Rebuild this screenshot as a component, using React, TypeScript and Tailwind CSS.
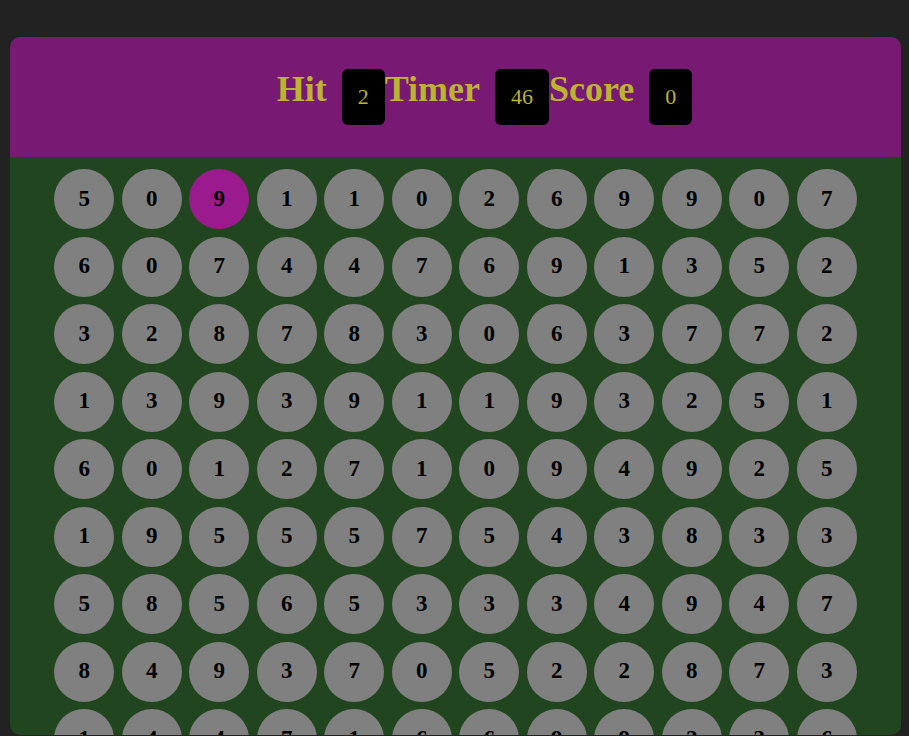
import React from "react";

const rows = [
  "5 0 9 1 1 0 2 6 9 9 0 7",
  "6 0 7 4 4 7 6 9 1 3 5 2",
  "3 2 8 7 8 3 0 6 3 7 7 2",
  "1 3 9 3 9 1 1 9 3 2 5 1",
  "6 0 1 2 7 1 0 9 4 9 2 5",
  "1 9 5 5 5 7 5 4 3 8 3 3",
  "5 8 5 6 5 3 3 3 4 9 4 7",
  "8 4 9 3 7 0 5 2 2 8 7 3",
  "1 4 4 7 1 6 6 9 9 2 3 6",
];

const nums = rows.flatMap((r) => r.split(" "));

function Stat({ label, value }: { label: string; value: string }) {
  return (
    <div className="flex items-start">
      <span className="mt-[2px] text-[36px] font-bold leading-none text-[#bdb330] mr-[15px]">{label}</span>
      <span className="bg-black text-[#bdb330] text-[22px] leading-none rounded-[6px] px-4 h-[56px] flex items-center">
        {value}
      </span>
    </div>
  );
}

export default function App() {
  return (
    <div
      className="h-[736px] overflow-hidden bg-[#222222] pt-[37px] pl-[10px] pr-[8px]"
      style={{ fontFamily: '"Liberation Serif", "Times New Roman", serif' }}
    >
      <div className="rounded-[10px] overflow-hidden h-[698px] bg-[#21461f]">
        <div className="bg-[#781a74] h-[120px] flex items-center justify-center pl-[58px]">
          <Stat label="Hit" value="2" />
          <Stat label="Timer" value="46" />
          <Stat label="Score" value="0" />
        </div>
        <div className="flex justify-center pt-[12px]">
          <div className="grid grid-cols-[repeat(12,60px)] gap-[7.5px]">
            {nums.map((n, i) => (
              <div
                key={i}
                className={`w-[60px] h-[60px] rounded-full flex items-center justify-center text-[23px] font-bold text-black ${
                  i === 2 ? "bg-[#9b1b8e]" : "bg-[#808080]"
                }`}
              >
                {n}
              </div>
            ))}
          </div>
        </div>
      </div>
    </div>
  );
}
